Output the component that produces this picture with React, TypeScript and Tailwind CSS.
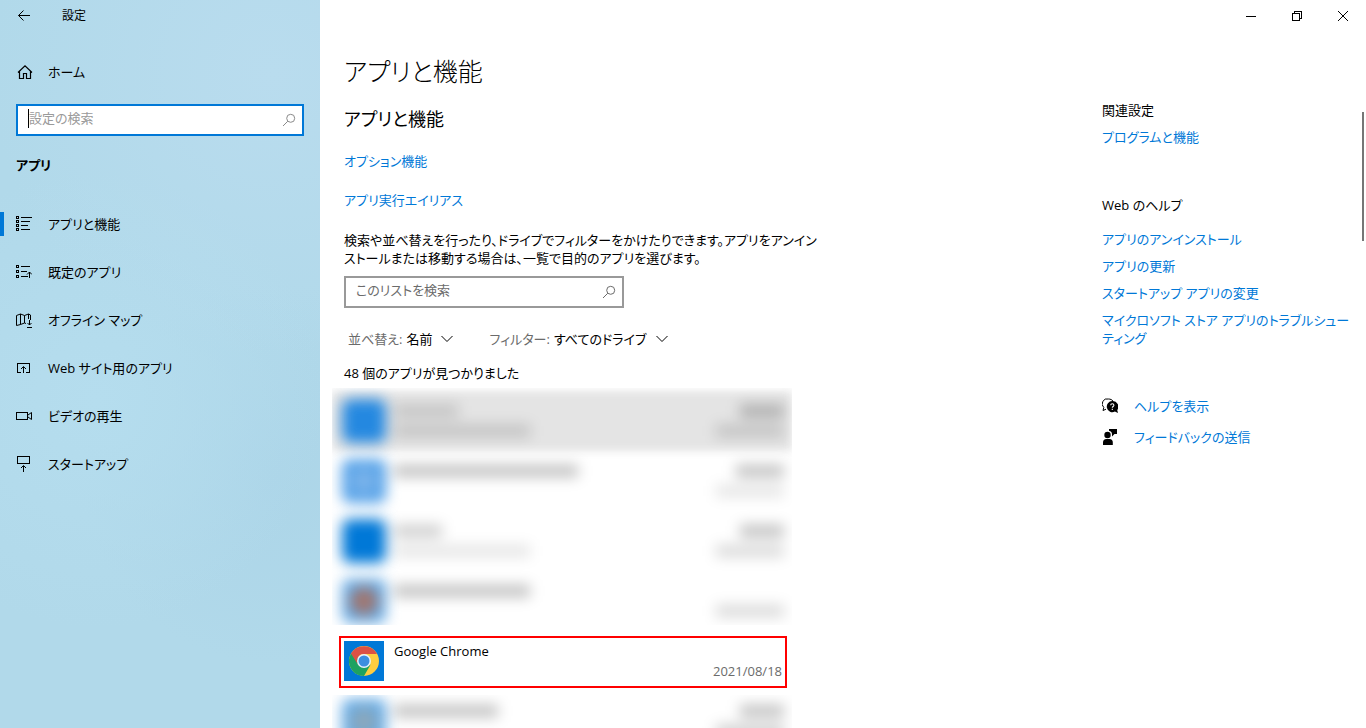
import React, { useState } from "react";

type IconProps = { className?: string };

const BackIcon: React.FC<IconProps> = ({ className }) => (
  <svg className={className} width="16" height="16" viewBox="0 0 16 16" fill="none" stroke="currentColor">
    <path d="M14 7.5H2.5M7.5 2.5l-5 5 5 5" />
  </svg>
);

const HomeIcon: React.FC<IconProps> = ({ className }) => (
  <svg className={className} width="16" height="16" viewBox="0 0 16 16" fill="none" stroke="currentColor" strokeWidth="1.2">
    <path d="M1 8.5L8 1.8l7 6.7M2.5 7.2v7.3h4v-5h3v5h4V7.2" />
  </svg>
);

const SearchIcon: React.FC<IconProps> = ({ className }) => (
  <svg className={className} width="14" height="14" viewBox="0 0 14 14" fill="none" stroke="currentColor">
    <circle cx="8.7" cy="5.3" r="4" />
    <path d="M5.8 8.2L1 13" />
  </svg>
);

const ChevronIcon: React.FC<IconProps> = ({ className }) => (
  <svg className={className} width="12" height="8" viewBox="0 0 12 8" fill="none" stroke="currentColor">
    <path d="M0.5 1L6 6.5 11.5 1" />
  </svg>
);

const AppsIcon: React.FC<IconProps> = ({ className }) => (
  <svg className={className} width="16" height="16" viewBox="0 0 16 16" fill="none" stroke="currentColor" shapeRendering="crispEdges">
    <path d="M.5.5h2v2h-2zM.5 4.5h2v2h-2zM.5 8.5h2v2h-2zM.5 12.5h2v2h-2z" />
    <path d="M5 1.5h11M5 5.5h9M5 9.5h7M5 13.5h9" />
  </svg>
);

const DefaultAppsIcon: React.FC<IconProps> = ({ className }) => (
  <svg className={className} width="16" height="16" viewBox="0 0 16 16" fill="none" stroke="currentColor">
    <g shapeRendering="crispEdges">
      <path d="M.5 1.5h2v2h-2zM.5 6.5h2v2h-2zM.5 11.5h2v2h-2z" />
      <path d="M5 2.5h9M5 7.5h6M5 12.5h7M13.5 8v6" />
    </g>
    <path d="M11 10.5L13.5 8l2.5 2.5" />
  </svg>
);

const MapIcon: React.FC<IconProps> = ({ className }) => (
  <svg className={className} width="16" height="16" viewBox="0 0 16 16" fill="none" stroke="currentColor">
    <path d="M10 11.5L8.500 11l-4 1.500-4 1V3.500l4-1.500 4 1.500 4-1.500 2 1v5M4.500 2v10.500M8.500 3.500V11M12.500 2v5" />
    <path d="M13.500 8v5M11.500 11l2 2 2-2M11 15.500h5" />
  </svg>
);

const WebAppsIcon: React.FC<IconProps> = ({ className }) => (
  <svg className={className} width="16" height="16" viewBox="0 0 16 16" fill="none" stroke="currentColor">
    <path d="M5 12.5H1.5v-9h12v9H10" shapeRendering="crispEdges" />
    <path d="M7.5 13V7M5 9l2.5-2.5L10 9" />
  </svg>
);

const VideoIcon: React.FC<IconProps> = ({ className }) => (
  <svg className={className} width="16" height="16" viewBox="0 0 16 16" fill="none" stroke="currentColor">
    <path d="M.5 4.5h11v7H.5z" shapeRendering="crispEdges" />
    <path d="M12 7l3.5-2.5v7L12 9" />
  </svg>
);

const StartupIcon: React.FC<IconProps> = ({ className }) => (
  <svg className={className} width="16" height="18" viewBox="0 0 16 18" fill="none" stroke="currentColor">
    <path d="M1.5 1.5h12v7h-12z" shapeRendering="crispEdges" />
    <path d="M7.5 17v-6M5 13l2.5-2.5L10 13" />
  </svg>
);

const HelpIcon: React.FC<IconProps> = ({ className }) => (
  <svg className={className} width="16" height="16" viewBox="0 0 16 16" fill="none">
    <path d="M4 11.2L1 12.5l.8-3A5 5 0 0 1 6.5 1C8.500 1 10 1.800 11 3" stroke="currentColor" />
    <path d="M10.300 3a5.600 5.600 0 1 0 2.600 10.600L16 15l-.8-3A5.600 5.600 0 0 0 10.300 3z" fill="currentColor" />
    <path d="M8.700 7.200c0-2 3.200-2 3.200 0 0 1.300-1.600 1.200-1.600 2.600M10.300 10.800v1.200" stroke="#fff" strokeWidth="1.100" />
  </svg>
);

const FeedbackIcon: React.FC<IconProps> = ({ className }) => (
  <svg className={className} width="16" height="18" viewBox="0 0 16 18" fill="currentColor">
    <circle cx="5.500" cy="7" r="3.200" />
    <path d="M1 17v-2.500A3.500 3.500 0 0 1 4.500 11h3a3.500 3.500 0 0 1 3.300 3.500V17zM7 1h8v5h-2.500L10 8.500V6.500C10 4.500 9 3.300 7 2.800z" />
  </svg>
);

const ChromeLogo: React.FC = () => (
  <svg className="size-10 shrink-0 bg-[#0078d7]" viewBox="0 0 40 40">
    <circle cx="20" cy="20" r="15" fill="#ffcd40" />
    <path d="M20 20L7 12.500A15 15 0 0 0 20 35l6.500-11.300z" fill="#1da261" />
    <path d="M7 12.500A15 15 0 0 1 33 13H20a7 7 0 0 0-6.100 10.500z" fill="#dd5144" />
    <circle cx="20" cy="20" r="7" fill="#eaf1fb" />
    <circle cx="20" cy="20" r="5.500" fill="#3c8ee0" />
  </svg>
);

const navItems = [
  { label: "アプリと機能", Icon: AppsIcon },
  { label: "既定のアプリ", Icon: DefaultAppsIcon },
  { label: "オフライン マップ", Icon: MapIcon },
  { label: "Web サイト用のアプリ", Icon: WebAppsIcon },
  { label: "ビデオの再生", Icon: VideoIcon },
  { label: "スタートアップ", Icon: StartupIcon },
];

const helpLinks = [
  "アプリのアンインストール",
  "アプリの更新",
  "スタートアップ アプリの変更",
  "マイクロソフト ストア アプリのトラブルシュー\nティング",
];

// Obscured entries: only the widths of the smeared lines are known
const hiddenApps = [
  { icon: "bg-[#2488e0]", dot: "", name: "w-16 bg-black/15", vendor: "w-34 bg-black/15", size: "w-11 bg-black/25", date: "w-17 bg-black/15", row: "bg-[#e4e4e4]" },
  { icon: "bg-[#4f9fe8]", dot: "bg-[#78b2ea]", name: "w-46 bg-black/25", vendor: "w-0", size: "w-12 bg-black/25", date: "w-17 bg-black/10", row: "" },
  { icon: "bg-[#0078d7]", dot: "", name: "w-12 bg-black/20", vendor: "w-34 bg-black/10", size: "w-11 bg-black/25", date: "w-17 bg-black/15", row: "" },
  { icon: "bg-[#62aae6]", dot: "bg-[#a07670]", name: "w-34 bg-black/25", vendor: "w-0", size: "w-0", date: "w-17 bg-black/15", row: "" },
];

const lastHiddenApp = {
  icon: "bg-[#62aae6]",
  dot: "bg-[#8aa8bd]",
  name: "w-26 bg-black/25",
  vendor: "w-0",
  size: "w-11 bg-black/25",
  date: "w-17 bg-black/20",
  row: "",
};

const HiddenApp: React.FC<{ app: (typeof hiddenApps)[number] }> = ({ app }) => (
  <li className="relative flex h-15 items-center pl-3 pr-2">
    <div className={`absolute inset-0 blur-xs ${app.row}`} />
    <div className={`relative -ml-0.5 flex size-11 shrink-0 items-center justify-center rounded-lg blur-[7px] ${app.icon}`}>
      <div className={`size-7 rounded-full ${app.dot}`} />
    </div>
    <div className="relative ml-2 flex flex-1 flex-col gap-2 blur-[7px]">
      <div className={`h-3 ${app.name}`} />
      <div className={`h-3 ${app.vendor}`} />
    </div>
    <div className="relative flex flex-col items-end gap-2 blur-[7px]">
      <div className={`h-3 ${app.size}`} />
      <div className={`h-3 ${app.date}`} />
    </div>
  </li>
);

const Sidebar: React.FC = () => {
  const [selected, setSelected] = useState(0);
  const [query, setQuery] = useState("");

  return (
    <aside className="w-80 shrink-0 bg-[#b1d9ea] bg-[radial-gradient(circle_at_85%_10%,#b9dcee,transparent_40%),radial-gradient(circle_at_30%_55%,#b5ddee,transparent_50%),radial-gradient(circle_at_85%_65%,#acd5e8,transparent_35%)]">
      <div className="flex h-8 items-center pl-4">
        <button aria-label="戻る">
          <BackIcon />
        </button>
        <span className="ml-[30px] text-xs">設定</span>
      </div>
      <button className="mt-4 flex h-12 w-full items-center pl-[17px]">
        <HomeIcon />
        <span className="ml-[15px]">ホーム</span>
      </button>
      <div className="relative mx-4 mt-2">
        <input
          aria-label="設定の検索"
          className="block h-8 w-full border-2 border-[#0078d7] bg-white pb-1 pl-[11px] pr-8 outline-none placeholder:text-[#9a9a9a]"
          placeholder="設定の検索"
          value={query}
          onChange={(e) => setQuery(e.target.value)}
        />
        <span className="absolute left-3 top-[5px] h-[19px] w-px bg-black" />
        <SearchIcon className="absolute right-2 top-[9px] text-[#8a8a8a]" />
      </div>
      <h2 className="mb-1.5 flex h-[58px] items-center pl-4 font-bold">アプリ</h2>
      <nav>
        {navItems.map(({ label, Icon }, i) => (
          <button
            key={label}
            className="flex h-12 w-full items-center"
            onClick={() => setSelected(i)}
          >
            <span className={`h-6 w-1 ${selected === i ? "bg-[#0078d7]" : ""}`} />
            <Icon className="ml-3" />
            <span className="ml-4">{label}</span>
          </button>
        ))}
      </nav>
    </aside>
  );
};

const AppList: React.FC = () => (
  <div className="-ml-3 mt-[5px]">
    <ul className="h-[237px] overflow-hidden pt-[3px]">
      {hiddenApps.map((app, i) => (
        <HiddenApp key={i} app={app} />
      ))}
    </ul>
    <ul className="mb-1 mt-2 py-[3px]">
      <li className="ml-[7px] mr-[5px] flex h-[52px] border-2 border-[#ff0000] p-[3px]">
        <ChromeLogo />
        <span className="ml-2.5 flex-1">Google Chrome</span>
        <span className="mb-0.5 self-end text-[#6b6b6b]">2021/08/18</span>
      </li>
    </ul>
    <div className="overflow-hidden">
      <ul className="-mt-1">
        <HiddenApp app={lastHiddenApp} />
      </ul>
    </div>
  </div>
);

const App: React.FC = () => {
  const [filter, setFilter] = useState("");

  return (
    <div className="flex h-screen overflow-hidden bg-white font-['Open_Sans','Noto_Sans_CJK_JP',sans-serif] text-[13px] leading-5 text-black [font-feature-settings:'palt']">
      <Sidebar />
      <div className="flex min-w-0 flex-1 flex-col">
        <header className="flex h-8 shrink-0 justify-end">
          <button aria-label="最小化" className="flex w-[46px] items-center justify-center">
            <svg width="10" height="10" stroke="currentColor" shapeRendering="crispEdges">
              <path d="M0 5.5h10" />
            </svg>
          </button>
          <button aria-label="元に戻す" className="flex w-[46px] items-center justify-center">
            <svg width="10" height="10" fill="none" stroke="currentColor" shapeRendering="crispEdges">
              <path d="M.5 2.500h7v7h-7zM2.500 2.500v-2h7v7h-2" />
            </svg>
          </button>
          <button aria-label="閉じる" className="flex w-[46px] items-center justify-center">
            <svg width="10" height="10" stroke="currentColor">
              <path d="M0 0l10 10M10 0L0 10" />
            </svg>
          </button>
        </header>
        <div className="flex min-h-0 flex-1 justify-between pl-6">
          <main className="w-[448px]">
            <h1 className="mt-[19px] text-[25px] font-light leading-10">アプリと機能</h1>
            <h2 className="mt-3.5 text-lg leading-7">アプリと機能</h2>
            <a href="#" className="mt-[18px] block w-fit text-[#0078d7]">オプション機能</a>
            <a href="#" className="mt-[19px] block w-fit text-[#0078d7]">アプリ実行エイリアス</a>
            <p className="mt-[21px] whitespace-nowrap leading-[18px]">
              検索や並べ替えを行ったり、ドライブでフィルターをかけたりできます。アプリをアンイン
              <br />
              ストールまたは移動する場合は、一覧で目的のアプリを選びます。
            </p>
            <div className="relative mt-[9px] w-[280px]">
              <input
                aria-label="このリストを検索"
                className="block h-8 w-full border-2 border-[#999999] bg-white pb-1 pl-2.5 pr-8 outline-none placeholder:text-[#6b6b6b]"
                placeholder="このリストを検索"
                value={filter}
                onChange={(e) => setFilter(e.target.value)}
              />
              <SearchIcon className="absolute right-2 top-[9px] text-[#6b6b6b]" />
            </div>
            <div className="ml-1 mt-[21px] flex gap-9">
              <div className="flex items-center">
                <label htmlFor="sort" className="mr-1 text-[#6b6b6b]">並べ替え:</label>
                <select id="sort" className="appearance-none bg-transparent">
                  <option>名前</option>
                </select>
                <ChevronIcon className="ml-2" />
              </div>
              <div className="flex items-center">
                <label htmlFor="drive" className="mr-1 text-[#6b6b6b]">フィルター:</label>
                <select id="drive" className="appearance-none bg-transparent">
                  <option>すべてのドライブ</option>
                </select>
                <ChevronIcon className="ml-2" />
              </div>
            </div>
            <p className="mt-3.5">48 個のアプリが見つかりました</p>
            <AppList />
          </main>
          <aside className="flex w-[264px] shrink-0 pt-[69px] leading-[18px]">
            <div className="flex-1">
              <h3>関連設定</h3>
              <a href="#" className="mt-[9px] block text-[#0078d7]">プログラムと機能</a>
              <h3 className="mb-4 mt-[50px]">Web のヘルプ</h3>
              <div className="flex flex-col gap-[9px]">
                {helpLinks.map((link) => (
                  <a key={link} href="#" className="whitespace-pre-line text-[#0078d7]">{link}</a>
                ))}
              </div>
              <a href="#" className="mt-[49px] flex h-5 items-center gap-4 text-[#0078d7]">
                <HelpIcon className="text-black" />
                ヘルプを表示
              </a>
              <a href="#" className="mt-[11px] flex h-5 items-center gap-4 text-[#0078d7]">
                <FeedbackIcon className="text-black" />
                フィードバックの送信
              </a>
            </div>
            <div className="mr-0.5 mt-[11px] h-[129px] w-0.5 bg-[#767676]" />
          </aside>
        </div>
      </div>
    </div>
  );
};

export default App;
